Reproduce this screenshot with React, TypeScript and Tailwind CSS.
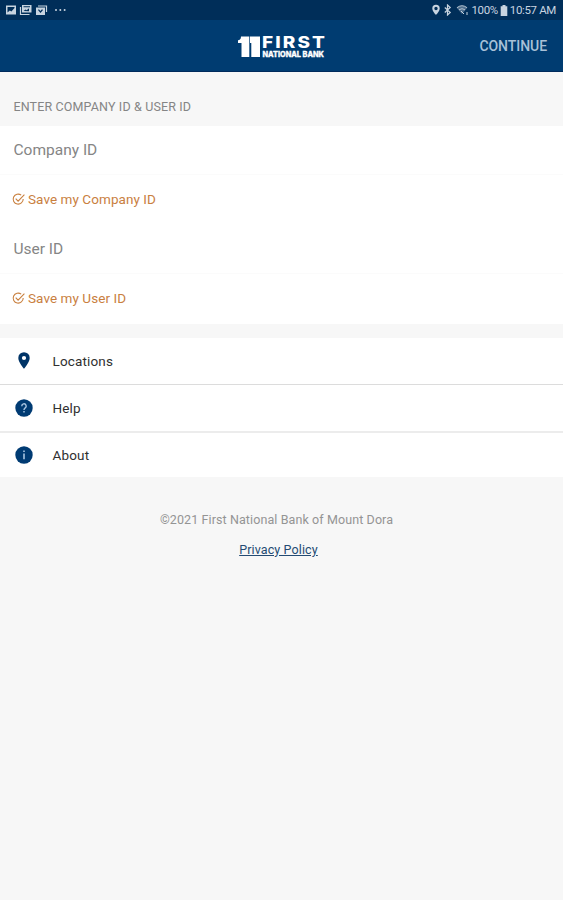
import { useState } from "react";
import type { ReactNode } from "react";

const LINKS = [
  { id: "locations", label: "Locations", icon: <PinIcon />, row: "h-[47px] border-b border-[#dcdcdc]" },
  { id: "help", label: "Help", icon: <HelpIcon />, row: "h-12 border-b-2 border-[#ececec]" },
  { id: "about", label: "About", icon: <InfoIcon />, row: "h-11" },
];

export default function App() {
  const [companyId, setCompanyId] = useState("");
  const [userId, setUserId] = useState("");

  return (
    <div className="flex min-h-screen flex-col bg-[#f7f7f7] font-[Roboto,sans-serif]">
      <StatusBar />

      <header className="grid h-[52px] grid-cols-[1fr_auto_1fr] items-center border-b border-[#002b5c] bg-[#003c71]">
        <span />
        <Logo />
        <button className="mt-0.5 mr-4 justify-self-end text-[14px] font-medium tracking-[-0.05px] text-[#a9c1d8]">
          CONTINUE
        </button>
      </header>

      <h1 className="flex h-[54px] items-end pb-[10px] pl-[13.5px] text-[12.5px] leading-[18px] tracking-[0.14px] text-[#858585]">
        ENTER COMPANY ID &amp; USER ID
      </h1>

      {/* Credentials */}
      <div className="h-[198px] bg-white">
        <Field label="Company ID" value={companyId} onChange={setCompanyId} />
        <SaveToggle label="Save my Company ID" />
        <Field label="User ID" value={userId} onChange={setUserId} />
        <SaveToggle label="Save my User ID" />
      </div>

      <nav className="mt-3.5 bg-white">
        {LINKS.map((l) => (
          <a key={l.id} href="#" className={`flex items-center pl-[14px] text-[13.5px] tracking-[0.15px] text-[#303030] ${l.row}`}>
            <span className="mr-[18.5px] flex w-5 justify-center">{l.icon}</span>
            {l.label}
          </a>
        ))}
      </nav>

      <footer className="mt-[34px] flex flex-col items-center pr-[10px] text-[12.5px] leading-[18px]">
        <p className="tracking-[0.1px] text-[#949494]">©2021 First National Bank of Mount Dora</p>
        <a href="#" className="mt-3 ml-1 tracking-[0.12px] text-[#244b73] underline">Privacy Policy</a>
      </footer>
    </div>
  );
}

function StatusBar() {
  return (
    <div className="flex h-5 items-center justify-between bg-[#002e59] pr-[7px] pl-[5px] text-[#c8d4e0]">
      <svg width="64" height="12" viewBox="0 0 64 12" fill="currentColor">
        <path fillRule="evenodd" d="M1 1.500h10v9H1zM2.500 3v5.500l2.300-2 1.600 1L9.500 4V3z" />
        <path fillRule="evenodd" d="M17 1h9.500v7.500H17zM18.500 2.300v1h6.500v-1zM18.500 7l2-1.600 1.200.8 2.300-2v3z" />
        <path d="M15.500 3v7.500h9" fill="none" stroke="currentColor" strokeWidth="1.200" />
        <path fillRule="evenodd" d="M31 3.500h9v7.500h-9zM33 6l2.500 3L38 6l-1-.8-1.600 1.900-1.500-1.800z" />
        <path d="M33 2h8.500v6" fill="none" stroke="currentColor" strokeWidth="1.200" />
        <circle cx="51" cy="6" r="1" />
        <circle cx="55.300" cy="6" r="1" />
        <circle cx="59.600" cy="6" r="1" />
      </svg>
      <div className="flex items-center text-[11.5px] leading-5">
        <svg className="mr-px" width="40" height="12" viewBox="0 0 40 12" fill="currentColor">
          <path fillRule="evenodd" d="M5 .8a3.700 3.700 0 0 0-3.700 3.700C1.300 7.200 5 11 5 11s3.700-3.800 3.700-6.500A3.700 3.700 0 0 0 5 .8zm0 2a1.700 1.700 0 1 1 0 3.400 1.700 1.700 0 0 1 0-3.400z" />
          <path d="M13.800 3.500l5.400 5L16.500 11V1l2.700 2.500-5.400 5" fill="none" stroke="currentColor" strokeWidth="1.200" />
          <path d="M25.500 3.500a9 9 0 0 1 11 0L31 10z" opacity=".4" />
          <path d="M26 3.700a8 8 0 0 1 10 0M28 5.800a5 5 0 0 1 6 0" fill="none" stroke="currentColor" strokeWidth="1" opacity=".8" />
          <path d="M30 7l3 3M36 8v3" fill="none" stroke="currentColor" />
        </svg>
        <span className="tracking-[-0.4px]">100%</span>
        <svg className="mx-0.5" width="8" height="11" viewBox="0 0 8 11" fill="currentColor">
          <path d="M2.500 0h3v1.300H7.300V11H.7V1.300h1.800z" />
        </svg>
        <span className="tracking-[-0.35px]">10:57 AM</span>
      </div>
    </div>
  );
}

function Logo() {
  return (
    <svg className="mt-0.5 overflow-visible" width="89" height="24" viewBox="0 0 89 24" fill="white" aria-label="First National Bank">
      <path d="M4 1.500h8.300V22H4.500V8H1V5.200c1.800 0 3-1.200 3-3.700z" />
      <path d="M13 1.500h10V22h-8.700V8H13z" />
      <text x="25" y="13" textLength="65" lengthAdjust="spacingAndGlyphs" letterSpacing="1.800" fontFamily="Inter, sans-serif" fontWeight="800" fontSize="16.300">
        FIRST
      </text>
      <text x="25.500" y="22" textLength="61.500" lengthAdjust="spacingAndGlyphs" stroke="white" strokeWidth="0.300" fontFamily="Inter, sans-serif" fontWeight="800" fontSize="7">
        NATIONAL BANK
      </text>
    </svg>
  );
}

function Field({ label, value, onChange }: {
  label: string; value: string; onChange: (v: string) => void;
}) {
  return (
    <input
      aria-label={label}
      value={value}
      onChange={(e) => onChange(e.target.value)}
      placeholder={label}
      className="block h-[49px] w-full border-b border-[#fbfbfb] pl-[13.5px] text-[15.5px] placeholder:text-[#858585] focus:outline-none"
    />
  );
}

function SaveToggle({ label }: { label: string }) {
  return (
    <button className="flex h-[50px] w-full items-center gap-[3px] pb-0.5 pl-3 text-[13.5px] tracking-[0.07px] text-[#c9803f]">
      <svg width="13" height="13" viewBox="0 0 13 13" fill="none" stroke="currentColor" strokeWidth="1.100">
        <path d="M9.200 2.100A5 5 0 1 0 11.200 6M3.700 5.600l2.400 2.500 6.300-6.400" />
      </svg>
      {label}
    </button>
  );
}

function PinIcon() {
  return (
    <svg className="mr-px mb-0.5" width="12" height="17" viewBox="0 0 12 17" fill="#003467">
      <path fillRule="evenodd" d="M6 .2A5.700 5.700 0 0 0 .3 5.900C.3 10.200 6 16.800 6 16.800s5.700-6.600 5.700-10.900A5.700 5.700 0 0 0 6 .2zm0 3.700a2.100 2.100 0 1 1 0 4.200 2.100 2.100 0 0 1 0-4.200z" />
    </svg>
  );
}

function Disc({ children }: { children: ReactNode }) {
  return (
    <svg className="mb-px" width="18" height="18" viewBox="0 0 18 18" fill="none" stroke="#a9c6e2" strokeWidth="1.400">
      <circle cx="9" cy="9" r="8.700" fill="#003b73" stroke="none" />
      {children}
    </svg>
  );
}

function HelpIcon() {
  return (
    <Disc>
      <path d="M6.800 7.200a2.200 2.200 0 1 1 3.400 1.700C9.300 9.500 9 9.900 9 10.900M9 12v1.500" />
    </Disc>
  );
}

function InfoIcon() {
  return (
    <Disc>
      <path d="M9 4.500V6M9 7.500v5.700" strokeWidth="1.600" />
    </Disc>
  );
}
